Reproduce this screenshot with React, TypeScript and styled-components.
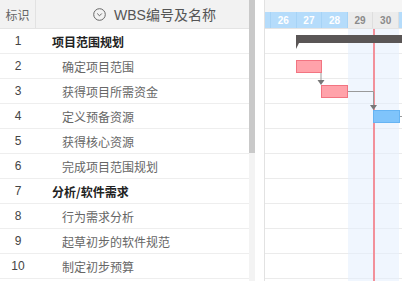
import React from "react";
import styled, { createGlobalStyle } from "styled-components";

const Global = createGlobalStyle`
  html, body { margin: 0; padding: 0; background: #fff; }
  body { font-family: "Liberation Sans", "Noto Sans CJK SC", sans-serif; }
`;

const ROW_H = 25;
const HEADER_H = 29;
const DAY_W = 25.6;

const Page = styled.div`
  display: flex;
  width: 402px;
  height: 281px;
  overflow: hidden;
  background: #fff;
`;

const LeftPanel = styled.div`
  width: 249px;
  flex: 0 0 249px;
  display: flex;
  flex-direction: column;
`;

const LeftHeader = styled.div`
  display: flex;
  height: ${HEADER_H - 1}px;
  flex: 0 0 ${HEADER_H - 1}px;
  background: #f2f2f2;
  border-bottom: 1px solid #e4e4e4;
`;

const IdHead = styled.div`
  width: 35px;
  flex: 0 0 35px;
  border-right: 1px solid #e2e2e2;
  display: flex;
  align-items: center;
  justify-content: center;
  font-size: 12px;
  color: #666;
  font-family: "Noto Sans CJK SC", sans-serif;
`;

const NameHead = styled.div`
  flex: 1;
  display: flex;
  align-items: center;
  justify-content: center;
  gap: 8px;
  padding-left: 24px;
  font-size: 14px;
  color: #555;
  font-family: "Liberation Sans", "Noto Sans CJK SC", sans-serif;
`;

const Row = styled.div`
  display: flex;
  height: ${ROW_H - 1}px;
  flex: 0 0 ${ROW_H - 1}px;
  border-bottom: 1px solid #eeeeee;
  background: #fff;
`;

const IdCell = styled.div`
  width: 36px;
  flex: 0 0 36px;
  display: flex;
  align-items: center;
  justify-content: center;
  font-size: 12px;
  color: #444;
`;

const NameCell = styled.div<{ $level: number }>`
  flex: 1;
  display: flex;
  align-items: center;
  padding-left: ${(p) => (p.$level === 0 ? 16 : 26)}px;
  font-size: 12px;
  color: ${(p) => (p.$level === 0 ? "#222" : "#666")};
  font-weight: ${(p) => (p.$level === 0 ? 700 : 400)};
  font-family: "Noto Sans CJK SC", sans-serif;
  white-space: nowrap;
`;

const ScrollTrack = styled.div`
  width: 6px;
  flex: 0 0 6px;
  background: #f3f3f3;
  display: flex;
  flex-direction: column;
`;

const ScrollThumb = styled.div`
  height: 153px;
  background: #c9c9c9;
`;

const Spacer = styled.div`
  width: 9px;
  flex: 0 0 9px;
  background: #fff;
`;

const Gantt = styled.div`
  flex: 1;
  border-left: 1px solid #e2e2e2;
  display: flex;
  flex-direction: column;
  overflow: hidden;
  position: relative;
`;

const GanttTop = styled.div`
  height: 12px;
  flex: 0 0 12px;
  background: #f5f5f5;
`;

const DayStrip = styled.div`
  display: flex;
  height: 16px;
  flex: 0 0 16px;
  margin-left: -19.6px;
  border-bottom: 1px solid #e4e4e4;
`;

const DayCell = styled.div<{ $weekend: boolean }>`
  flex: 0 0 ${DAY_W}px;
  box-sizing: border-box;
  display: flex;
  align-items: center;
  justify-content: center;
  font-size: 10px;
  font-weight: 700;
  background: ${(p) => (p.$weekend ? "#ececec" : "#b5dcfb")};
  color: ${(p) => (p.$weekend ? "#8a8a8a" : "#fff")};
  border-right: 1px solid ${(p) => (p.$weekend ? "#dedede" : "#a6d3f6")};
`;

const Body = styled.div`
  position: relative;
  flex: 1;
  display: flex;
  flex-direction: column;
`;

const GanttRow = styled.div`
  height: ${ROW_H - 1}px;
  flex: 0 0 ${ROW_H - 1}px;
  border-bottom: 1px solid #ebebeb;
`;

const Band = styled.div`
  position: absolute;
  top: 0;
  bottom: 0;
  left: 83px;
  width: 51px;
  background: rgba(228, 238, 253, 0.55);
`;

const Today = styled.div`
  position: absolute;
  top: 0;
  bottom: 0;
  left: 107.5px;
  width: 2px;
  background: #f2909a;
`;

const Bar = styled.div<{ $kind: "red" | "blue" }>`
  position: absolute;
  height: 13px;
  box-sizing: border-box;
  background: ${(p) => (p.$kind === "red" ? "#ffa2aa" : "#7fc4fb")};
  border: 1px solid ${(p) => (p.$kind === "red" ? "#f27481" : "#66b4f3")};
`;

const Links = styled.svg`
  position: absolute;
  left: 0;
  top: 0;
  overflow: visible;
`;

const rows: { id: number; name: string; level: number }[] = [
  { id: 1, name: "项目范围规划", level: 0 },
  { id: 2, name: "确定项目范围", level: 1 },
  { id: 3, name: "获得项目所需资金", level: 1 },
  { id: 4, name: "定义预备资源", level: 1 },
  { id: 5, name: "获得核心资源", level: 1 },
  { id: 6, name: "完成项目范围规划", level: 1 },
  { id: 7, name: "分析/软件需求", level: 0 },
  { id: 8, name: "行为需求分析", level: 1 },
  { id: 9, name: "起草初步的软件规范", level: 1 },
  { id: 10, name: "制定初步预算", level: 1 },
];

const days = [
  { d: 25, w: false },
  { d: 26, w: false },
  { d: 27, w: false },
  { d: 28, w: false },
  { d: 29, w: true },
  { d: 30, w: true },
  { d: 31, w: false },
];

const ChevronCircle = () => (
  <svg width="13" height="13" viewBox="0 0 13 13" fill="none" stroke="#666" strokeWidth="1">
    <circle cx="6.5" cy="6.5" r="5.8" />
    <path d="M4.2 5.5 L6.5 7.8 L8.8 5.5" />
  </svg>
);

export default function App() {
  return (
    <Page>
      <Global />
      <LeftPanel>
        <LeftHeader>
          <IdHead>标识</IdHead>
          <NameHead>
            <ChevronCircle />
            <span>WBS编号及名称</span>
          </NameHead>
        </LeftHeader>
        {rows.map((r) => (
          <Row key={r.id}>
            <IdCell>{r.id}</IdCell>
            <NameCell $level={r.level}>{r.name}</NameCell>
          </Row>
        ))}
      </LeftPanel>
      <ScrollTrack>
        <ScrollThumb />
      </ScrollTrack>
      <Spacer />
      <Gantt>
        <GanttTop />
        <DayStrip>
          {days.map((d) => (
            <DayCell key={d.d} $weekend={d.w}>
              {d.d < 31 && d.d > 25 ? d.d : ""}
            </DayCell>
          ))}
        </DayStrip>
        <Body>
          <Band />
          {rows.map((r) => (
            <GanttRow key={r.id} />
          ))}
          <Today />
          <Bar $kind="red" style={{ left: 31, top: 31, width: 26 }} />
          <Bar $kind="red" style={{ left: 56, top: 56, width: 27 }} />
          <Bar $kind="blue" style={{ left: 108, top: 81, width: 27 }} />
          <Links width="137" height="252">
            <path d="M31 6 H140 V14 H34 L31 20 Z" fill="#5a5656" />
            <path d="M56 44 V52" stroke="#9a9a9a" strokeWidth="1" fill="none" />
            <path d="M52.5 51 L59.5 51 L56 56 Z" fill="#777" />
            <path d="M83 62.5 H108.5 V76" stroke="#9a9a9a" strokeWidth="1" fill="none" />
            <path d="M105 76 L112 76 L108.5 81 Z" fill="#777" />
            <path d="M135 87.5 H140" stroke="#9a9a9a" strokeWidth="1" fill="none" />
          </Links>
        </Body>
      </Gantt>
    </Page>
  );
}
